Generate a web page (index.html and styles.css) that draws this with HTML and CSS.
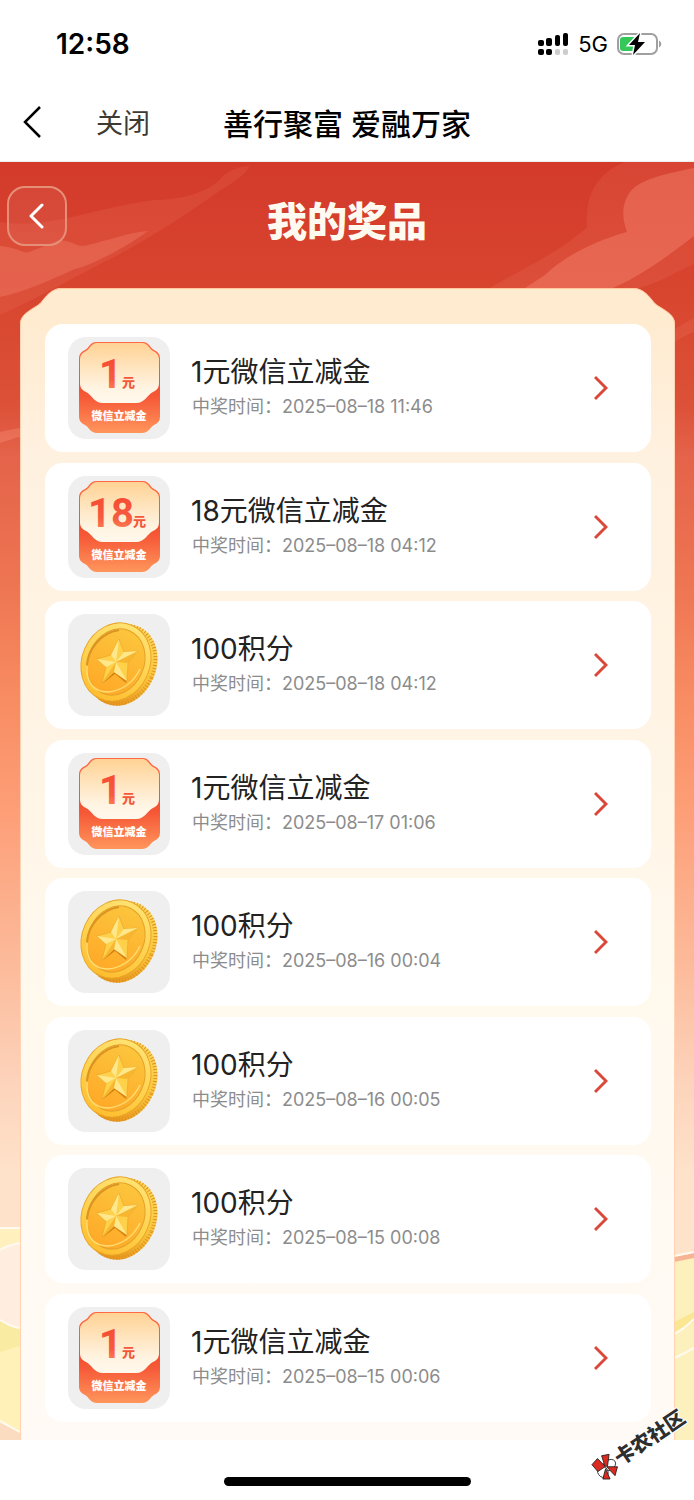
FILE: index.html
```html
<!DOCTYPE html>
<html lang="zh-CN">
<head>
<meta charset="utf-8">
<meta name="viewport" content="width=device-width, initial-scale=1">
<title>善行聚富 爱融万家</title>
<link rel="stylesheet" href="styles.css">
</head>
<body>
<svg class="defs" width="0" height="0" aria-hidden="true">
  <defs>
    <linearGradient id="g-ticket" x1="0" y1="0" x2="0" y2="1">
      <stop offset="0" stop-color="#ff6a45"/><stop offset=".5" stop-color="#f4502f"/><stop offset=".62" stop-color="#f65a38"/><stop offset="1" stop-color="#ff965c"/>
    </linearGradient>
    <linearGradient id="g-plate" x1="0" y1="0" x2="0" y2="1">
      <stop offset="0" stop-color="#ffd294"/><stop offset=".75" stop-color="#fff4e2"/><stop offset="1" stop-color="#fff8ec"/>
    </linearGradient>
    <linearGradient id="g-digit" x1="0" y1="0" x2="0" y2="1">
      <stop offset="0" stop-color="#f4472f"/><stop offset=".6" stop-color="#f65c40"/><stop offset="1" stop-color="#ff9a62"/>
    </linearGradient>
    <linearGradient id="g-rim" x1="0" y1="0" x2="0" y2="1">
      <stop offset="0" stop-color="#ffd658"/><stop offset=".5" stop-color="#fbc63c"/><stop offset="1" stop-color="#e8921a"/>
    </linearGradient>
    <linearGradient id="g-face" x1="0" y1="0" x2="0" y2="1">
      <stop offset="0" stop-color="#ffe272"/><stop offset=".6" stop-color="#ffd04a"/><stop offset="1" stop-color="#ffbd30"/>
    </linearGradient>
    <linearGradient id="g-well" x1="0" y1="0" x2="0" y2="1">
      <stop offset="0" stop-color="#fcc53c"/><stop offset="1" stop-color="#ffa928"/>
    </linearGradient>
    <symbol id="ticket" viewBox="0 0 102 102">
      <path fill="url(#g-ticket)" d="M28 5H75C81 5 82 11 86 13C90 15 92 17 92 22V79C92 84 90 86 86 88C82 90 81 96 74 96H29C22 96 21 90 17 88C13 86 11 84 11 79V22C11 17 13 15 17 13C21 11 22 5 28 5Z"/>
      <path fill="url(#g-plate)" d="M29 6H74C80 6 81 12 85 14C89 16 91 18 91 23V46C91 51 89 53 85 55C79 58 77 66 68 66H35C26 66 24 58 18 55C14 53 12 51 12 46V23C12 18 14 16 18 14C22 12 23 6 29 6Z"/>
      <text class="ticket-label" x="51" y="83" text-anchor="middle">微信立减金</text>
    </symbol>
    <symbol id="coin" viewBox="0 0 102 102">
      <g transform="rotate(24 54 51)">
        <ellipse cx="54" cy="51" rx="34" ry="42" fill="url(#g-rim)"/>
        <ellipse cx="54" cy="51" rx="32" ry="40" fill="none" stroke="#dc9422" stroke-width="4" stroke-dasharray="1 2"/>
      </g>
      <g transform="rotate(24 48 48)">
        <ellipse cx="48" cy="48" rx="34" ry="40" fill="url(#g-face)" stroke="#e8a628"/>
        <ellipse cx="48" cy="48" rx="28" ry="34" fill="url(#g-well)" stroke="#e3a02a"/>
      </g>
      <path d="M19 51C20 36 32 19 51 16" fill="none" stroke="#d99424" stroke-width="2"/>
      <path d="M19 52C18 68 25 78 40 78C54 77 66 68 72 55" fill="none" stroke="#ffdc70" stroke-width="1.500"/>
      <path fill="#d98212" d="M34 70L47 60L58 69L59 66L47 57Z"/>
      <path fill="#ffd04a" stroke="#e3a32c" stroke-width=".6" d="M51 25L56 38L70 37L60 49L59 67L46 58L34 69L38 53L29 45L43 41Z"/>
      <path fill="#ffe78c" d="M51 25L48 48L43 41ZM29 45L48 48L38 53ZM70 37L48 48L56 38ZM59 67L48 48L46 58Z"/>
      <path fill="#f7b530" d="M34 69L48 48L46 58ZM70 37L48 48L60 49Z"/>
    </symbol>
    <symbol id="chevron" viewBox="0 0 14 26">
      <path d="M1 2L12 13L1 24" fill="none" stroke="#d9483a" stroke-width="3"/>
    </symbol>
    <symbol id="corner" viewBox="0 0 46 36">
      <path fill="#ffebd0" d="M46 0H42C33 0 28 6 23 12C19 18 14 19 9 23C3 27 0 31 0 36H46Z"/>
      <path fill="none" stroke="#ffc79c" d="M46 .5H42C33 .5 28 6 23 12C19 18 14 19 9 23C3 27 .5 31 .5 36"/>
    </symbol>
  </defs>
</svg>

<div class="screen">
  <header class="status">
    <time>12:58</time>
    <div class="status-right">
      <svg width="31" height="22" viewBox="0 0 31 22" role="img" aria-label="信号">
        <g fill="#000"><rect y="7" width="6" height="6" rx="2"/><rect x="8" y="5" width="6" height="8" rx="2"/><rect x="17" y="2" width="5" height="11" rx="2"/><rect x="25" width="5" height="13" rx="2"/><rect y="16" width="6" height="6" rx="2"/><rect x="8" y="16" width="6" height="6" rx="2"/></g>
        <g fill="#ccc"><rect x="17" y="16" width="5" height="6" rx="2"/><rect x="25" y="16" width="5" height="6" rx="2"/></g>
      </svg>
      <span>5G</span>
      <svg width="45" height="22" viewBox="0 0 45 22" role="img" aria-label="充电中">
        <rect x="1" y="1" width="39" height="20" rx="6" fill="#fff" stroke="#a0a0a0" stroke-width="2"/>
        <rect x="3" y="4" width="17" height="14" rx="3" fill="#34c759"/>
        <path d="M42 7.500C45 9 45 13 42 14.500Z" fill="#a0a0a0"/>
        <path d="M23 0L12 12H18L16 22L28 9H21Z" fill="#000" stroke="#fff" stroke-width="3" paint-order="stroke"/>
      </svg>
    </div>
  </header>

  <nav class="nav">
    <div class="nav-left">
      <button class="nav-back" type="button" aria-label="返回"><svg width="20" height="34" viewBox="0 0 20 34"><path d="M18 2L3 17L18 32" fill="none" stroke="#000" stroke-width="2.500"/></svg></button>
      <button class="nav-close" type="button">关闭</button>
    </div>
    <div class="nav-title">善行聚富 爱融万家</div>
  </nav>

  <main class="page">
    <svg class="clouds" viewBox="0 0 694 300" preserveAspectRatio="none" aria-hidden="true">
      <g fill="#ff9c86">
        <path opacity=".12" d="M0 60C50 68 95 45 155 38C195 37 215 24 222 15C230 8 240 4 249 4C246 14 230 22 218 30C190 50 160 70 120 92C80 112 40 135 0 153Z"/>
        <path opacity=".26" d="M0 84C20 86 23 92 29 90L60 78C75 80 78 86 88 83C110 78 130 70 148 69C125 86 90 104 75 107C50 118 25 130 0 135Z"/>
        <path opacity=".12" d="M694 0H625C595 12 585 35 587 65C560 90 520 108 490 126H640C665 118 680 108 694 102Z"/>
        <path opacity=".32" d="M694 6C665 12 640 17 630 30C620 45 623 58 627 70C590 80 560 98 545 113L525 126H613C645 112 670 92 694 74Z"/>
        <path opacity=".12" d="M694 156C687 160 680 163 674 168V180C682 176 688 172 694 170Z"/>
        <path opacity=".3" d="M0 270C8 268 14 267 20 266V275C14 276 7 279 0 281Z"/>
      </g>
    </svg>
    <svg class="hills" viewBox="0 0 694 230" preserveAspectRatio="none" aria-hidden="true">
      <path fill="#fff0bd" d="M0 18H20V32C14 32 6 36 0 38Z"/>
      <path fill="#ffeee0" d="M0 40C6 37 14 35 20 34V118C12 118 6 113 0 110Z"/>
      <path fill="#faeba2" d="M0 111C6 114 14 118 20 118V222C14 218 6 216 0 213Z"/>
      <path fill="#fff1b8" d="M0 142L20 136V220C12 216 6 213 0 211Z"/>
      <path fill="#fcdcc0" d="M0 213C6 215 14 218 20 222V230H0Z"/>
      <path fill="none" stroke="#fffaf0" stroke-width="2" d="M0 18H20M0 40C6 36 14 34 20 33M0 110C6 113 12 118 20 118M0 211L20 222"/>
      <path fill="#fcf0bd" d="M674 50L694 46V230H674Z"/>
      <path fill="#f7b494" d="M674 47L694 43V48L674 52Z"/>
      <path fill="#fbe792" d="M674 112L694 102V112L674 124Z"/>
      <path fill="none" stroke="#fffaf0" stroke-width="2" d="M674 46L694 42M674 124C682 120 688 115 694 109M674 148C682 145 688 141 694 138"/>
    </svg>

    <div class="page-head">
      <button class="page-back" type="button" aria-label="返回上一页"><svg width="18" height="26" viewBox="0 0 18 26"><path d="M14 2L3 13L14 24" fill="none" stroke="#fff" stroke-width="3" stroke-linecap="round" stroke-linejoin="round"/></svg></button>
      <h1>我的奖品</h1>
    </div>

    <section class="panel" aria-label="奖品列表">
      <div class="panel-cap" aria-hidden="true">
        <svg width="46" height="36"><use href="#corner"/></svg>
        <span class="panel-edge"></span>
        <svg class="flip" width="46" height="36"><use href="#corner"/></svg>
      </div>
      <ul class="prizes">
        <li><a class="card" href="#">
          <svg class="tile" viewBox="0 0 102 102" aria-hidden="true"><use href="#ticket"/><text class="digit" x="31" y="51">1</text><text class="yuan" x="54" y="50">元</text></svg>
          <span class="info"><strong>1元微信立减金</strong><small>中奖时间：<time>2025–08–18 11:46</time></small></span>
          <svg class="arrow" aria-hidden="true"><use href="#chevron"/></svg></a></li>
        <li><a class="card" href="#">
          <svg class="tile" viewBox="0 0 102 102" aria-hidden="true"><use href="#ticket"/><text class="digit" x="20" y="51">18</text><text class="yuan" x="65" y="50">元</text></svg>
          <span class="info"><strong>18元微信立减金</strong><small>中奖时间：<time>2025–08–18 04:12</time></small></span>
          <svg class="arrow" aria-hidden="true"><use href="#chevron"/></svg></a></li>
        <li><a class="card" href="#">
          <svg class="tile" viewBox="0 0 102 102" aria-hidden="true"><use href="#coin"/></svg>
          <span class="info"><strong>100积分</strong><small>中奖时间：<time>2025–08–18 04:12</time></small></span>
          <svg class="arrow" aria-hidden="true"><use href="#chevron"/></svg></a></li>
        <li><a class="card" href="#">
          <svg class="tile" viewBox="0 0 102 102" aria-hidden="true"><use href="#ticket"/><text class="digit" x="31" y="51">1</text><text class="yuan" x="54" y="50">元</text></svg>
          <span class="info"><strong>1元微信立减金</strong><small>中奖时间：<time>2025–08–17 01:06</time></small></span>
          <svg class="arrow" aria-hidden="true"><use href="#chevron"/></svg></a></li>
        <li><a class="card" href="#">
          <svg class="tile" viewBox="0 0 102 102" aria-hidden="true"><use href="#coin"/></svg>
          <span class="info"><strong>100积分</strong><small>中奖时间：<time>2025–08–16 00:04</time></small></span>
          <svg class="arrow" aria-hidden="true"><use href="#chevron"/></svg></a></li>
        <li><a class="card" href="#">
          <svg class="tile" viewBox="0 0 102 102" aria-hidden="true"><use href="#coin"/></svg>
          <span class="info"><strong>100积分</strong><small>中奖时间：<time>2025–08–16 00:05</time></small></span>
          <svg class="arrow" aria-hidden="true"><use href="#chevron"/></svg></a></li>
        <li><a class="card" href="#">
          <svg class="tile" viewBox="0 0 102 102" aria-hidden="true"><use href="#coin"/></svg>
          <span class="info"><strong>100积分</strong><small>中奖时间：<time>2025–08–15 00:08</time></small></span>
          <svg class="arrow" aria-hidden="true"><use href="#chevron"/></svg></a></li>
        <li><a class="card" href="#">
          <svg class="tile" viewBox="0 0 102 102" aria-hidden="true"><use href="#ticket"/><text class="digit" x="31" y="51">1</text><text class="yuan" x="54" y="50">元</text></svg>
          <span class="info"><strong>1元微信立减金</strong><small>中奖时间：<time>2025–08–15 00:06</time></small></span>
          <svg class="arrow" aria-hidden="true"><use href="#chevron"/></svg></a></li>
      </ul>
    </section>
  </main>

  <footer class="home"><span class="home-bar"></span></footer>

  <div class="watermark">
    <svg width="26" height="26" viewBox="0 0 26 26" aria-hidden="true">
      <g stroke="#222" stroke-width=".8">
        <ellipse cx="17" cy="13" rx="7" ry="5" fill="#fff"/><ellipse cx="8" cy="15" rx="5" ry="6" fill="#fff"/>
        <path fill="#dc2a20" d="M3 3L11 1L13 12L4 12ZM16 1L23 4L15 13L13 11ZM12 14L10 25L4 21ZM14 13L23 19L16 25Z"/>
      </g>
    </svg>
    <span>卡农社区</span>
  </div>
</div>
</body>
</html>
```
FILE: styles.css
```css
* { box-sizing: border-box; }
body {
  margin: 0;
  background: #fff;
  color: #222;
  font-family: Inter, "Noto Sans CJK SC", sans-serif;
}
button {
  border: 0;
  padding: 0;
  background: none;
  font: inherit;
  color: inherit;
}
svg { display: block; }
.defs { position: absolute; }

.screen {
  position: relative;
  display: flex;
  flex-direction: column;
  min-height: 100vh;
  overflow: hidden;
}

.status {
  display: flex;
  align-items: center;
  justify-content: space-between;
  height: 88px;
  padding: 0 32px 0 56px;
  color: #000;
  font-size: 28px;
  font-weight: 600;
}
.status-right {
  display: flex;
  align-items: center;
  gap: 9px;
  font-size: 22px;
  font-weight: 400;
}

.nav {
  display: grid;
  grid-template-columns: 1fr auto 1fr;
  align-items: center;
  height: 74px;
  padding-bottom: 6px;
  border-bottom: 1px solid #eee;
}
.nav-left {
  display: flex;
  align-items: center;
  gap: 54px;
  padding-left: 22px;
}
.nav-close {
  color: #3c3a33;
  font-size: 27px;
  font-weight: 400;
}
.nav-title {
  color: #000;
  font-size: 30px;
  font-weight: 500;
  white-space: nowrap;
}

.page {
  position: relative;
  flex: 1;
  display: flex;
  flex-direction: column;
  background: linear-gradient(#d33a2a 0%, #d8452f 10%, #dc5138 19%, #e4634a 23%, #ee7552 33%, #f88c62 42%, #fd9f78 51%, #fcbb9b 63%, #fdd3bb 72%, #fee2c9 79%, #ffe5d0 100%);
}
.clouds, .hills {
  position: absolute;
  left: 0;
  width: 100%;
}
.clouds { top: 0; height: 300px; }
.hills { bottom: 0; height: 230px; }

.page-head {
  position: relative;
  display: grid;
  grid-template-columns: 1fr auto 1fr;
  align-items: start;
  height: 126px;
  padding: 24px 7px 0;
}
.page-back {
  display: grid;
  place-items: center;
  width: 60px;
  height: 60px;
  border: 2px solid #e68f78;
  border-radius: 18px;
  background: rgba(255, 255, 255, .06);
}
.page-head h1 {
  margin: 6px 0 0;
  color: #fffaf0;
  font-size: 40px;
  font-weight: 900;
  line-height: 60px;
}

.panel {
  position: relative;
  flex: 1;
  display: flex;
  flex-direction: column;
  margin: 0 19px 0 20px;
}
.panel-cap { display: flex; }
.panel-edge {
  flex: 1;
  border-top: 1px solid #ffc79c;
  background: #ffebd0;
}
.flip { transform: scaleX(-1); }
.prizes {
  flex: 1;
  display: flex;
  flex-direction: column;
  justify-content: space-between;
  gap: 10px;
  margin: 0;
  padding: 0 23px 18px 24px;
  border: solid #ffd3b4;
  border-width: 0 1px;
  background: linear-gradient(#ffebd0, #fff1e0 12%, #fff4e4 35%, #fff9ee 60%, #fffaf5 100%);
  list-style: none;
}
.card {
  display: flex;
  align-items: center;
  gap: 21px;
  height: 128px;
  padding: 0 43px 0 23px;
  border-radius: 18px;
  background: #fff;
  color: inherit;
  text-decoration: none;
}
.tile {
  flex: none;
  width: 102px;
  height: 102px;
  border-radius: 18px;
  background: #efefef;
}
.info {
  flex: 1;
  display: flex;
  flex-direction: column;
  padding-bottom: 2px;
}
.info strong {
  font-size: 28px;
  font-weight: 400;
  line-height: 40px;
}
.info small {
  padding-left: 1px;
  color: #8c8c8c;
  font-size: 18px;
  font-weight: 400;
  line-height: 30px;
}
.arrow { width: 14px; height: 26px; }
.ticket-label {
  fill: #fff;
  font-size: 11px;
  font-weight: 900;
}
.digit {
  fill: url(#g-digit);
  font-family: Roboto, sans-serif;
  font-size: 40px;
  font-weight: 700;
}
.yuan {
  fill: #f4583c;
  font-size: 13px;
  font-weight: 900;
}

.home {
  display: flex;
  align-items: flex-end;
  justify-content: center;
  height: 60px;
  padding-bottom: 14px;
}
.home-bar {
  width: 247px;
  height: 9px;
  border-radius: 5px;
  background: #000;
}

.watermark {
  position: absolute;
  right: 2px;
  bottom: 42px;
  display: flex;
  align-items: center;
  color: #2e2e2e;
  font-size: 20px;
  font-weight: 900;
  line-height: 26px;
  text-shadow: 1px 1px #fff, -1px -1px #fff, 1px -1px #fff, -1px 1px #fff;
  transform: rotate(-34deg);
}
```
